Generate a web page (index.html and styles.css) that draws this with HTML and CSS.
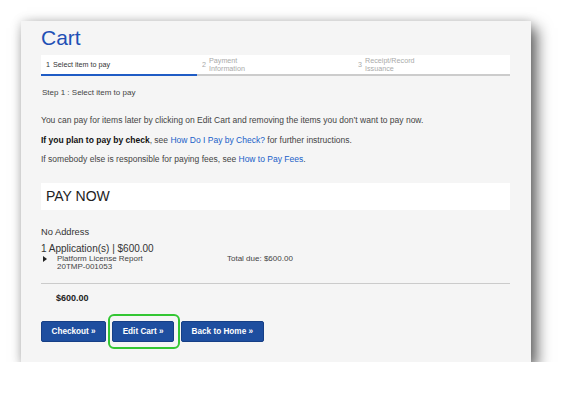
FILE: index.html
```html
<!DOCTYPE html>
<html>
<head>
<meta charset="utf-8">
<link rel="stylesheet" href="styles.css">
</head>
<body>
<div class="panel">
  <h1 class="title">Cart</h1>
  <div class="steps">
    <div class="step active"><span class="num">1</span><span class="lbl">Select item to pay</span></div>
    <div class="step"><span class="num">2</span><span class="lbl two">Payment<br>Information</span></div>
    <div class="step"><span class="num">3</span><span class="lbl two">Receipt/Record<br>Issuance</span></div>
  </div>
  <div class="steptext">Step 1 : Select item to pay</div>
  <div class="info">
    <p>You can pay for items later by clicking on Edit Cart and removing the items you don’t want to pay now.</p>
    <p><b>If you plan to pay by check</b>, see <a href="#">How Do I Pay by Check?</a> for further instructions.</p>
    <p>If somebody else is responsible for paying fees, see <a href="#">How to Pay Fees</a>.</p>
  </div>
  <div class="paynow">PAY NOW</div>
  <div class="addr">No Address</div>
  <div class="apps">1 Application(s) | $600.00</div>
  <div class="item">
    <svg class="tri" width="4" height="6" viewBox="0 0 4 6"><path d="M0 0 L4 3 L0 6 Z" fill="#222"/></svg>
    <div class="iname">Platform License Report<br>20TMP-001053</div>
    <div class="idue">Total due: $600.00</div>
  </div>
  <div class="total"><b>$600.00</b></div>
  <div class="buttons">
    <a class="btn" href="#">Checkout »</a>
    <span class="hl"><a class="btn" href="#">Edit Cart »</a></span>
    <a class="btn" href="#">Back to Home »</a>
  </div>
</div>
</body>
</html>
```
FILE: styles.css
```css
html, body {
  margin: 0;
  padding: 0;
  background: #ffffff;
}
body {
  font-family: "Liberation Sans", Arial, sans-serif;
  color: #333;
  padding: 21px 0 0 21px;
}
.panel {
  width: 469px;
  height: 336px;
  background: #f5f5f5;
  padding: 5px 21px 0 20px;
  box-shadow: 6px 7px 14px rgba(0,0,0,0.6), 0 0 10px rgba(0,0,0,0.14);
}
.title {
  margin: 0;
  font-size: 21px;
  line-height: 24px;
  font-weight: normal;
  color: #1f50b5;
}
.steps {
  margin-top: 5px;
  display: grid;
  grid-template-columns: 156px 156px 1fr;
  background: #fff;
}
.step {
  height: 19px;
  border-bottom: 2px solid #cccccc;
  display: flex;
  align-items: center;
  padding-left: 5px;
  font-size: 7.2px;
  color: #aaa;
}
.step.active {
  border-bottom-color: #1f5cc5;
  color: #333;
}
.num {
  margin-right: 3px;
}
.step .lbl {
  line-height: 12px;
}
.step .lbl.two {
  line-height: 7.2px;
}
.steptext {
  margin-top: 11px;
  font-size: 8px;
  line-height: 12px;
  color: #444;
  padding-left: 1px;
}
.info {
  margin-top: 15px;
}
.info p {
  margin: 0 0 7.6px;
  font-size: 8.5px;
  line-height: 12px;
  color: #444;
}
.info p b {
  color: #111;
}
.info a {
  color: #2060c8;
  text-decoration: none;
}
.paynow {
  margin-top: 17.5px;
  height: 27px;
  background: #fff;
  font-size: 14px;
  line-height: 27px;
  padding-left: 5px;
  color: #222;
}
.addr {
  margin-top: 16.5px;
  font-size: 9.3px;
  line-height: 13px;
  color: #333;
}
.apps {
  margin-top: 2.5px;
  font-size: 10px;
  line-height: 13px;
  color: #333;
}
.item {
  display: grid;
  grid-template-columns: 16px 170px 1fr;
  font-size: 8px;
  line-height: 8.5px;
  color: #444;
}
.tri {
  margin: 1.5px 0 0 2px;
}
.total {
  margin-top: 11px;
  border-top: 1px solid #cbcbcb;
  padding: 8.5px 0 0 15px;
  font-size: 9px;
  line-height: 12px;
  color: #222;
}
.buttons {
  margin-top: 16.5px;
  display: flex;
  align-items: center;
}
.btn {
  display: block;
  height: 21px;
  box-sizing: border-box;
  padding: 0 9.5px;
  background: #1e4e9f;
  border: 1px solid #163f86;
  border-radius: 2px;
  color: #fff;
  font-weight: bold;
  font-size: 8.2px;
  line-height: 19px;
  text-decoration: none;
  white-space: nowrap;
}
.hl {
  position: relative;
  margin: 0 7px 0 6px;
}
.hl::after {
  content: "";
  position: absolute;
  left: -4.5px;
  right: -6px;
  top: -7px;
  bottom: -7px;
  border: 2.5px solid #33c633;
  border-radius: 6px;
}
```
